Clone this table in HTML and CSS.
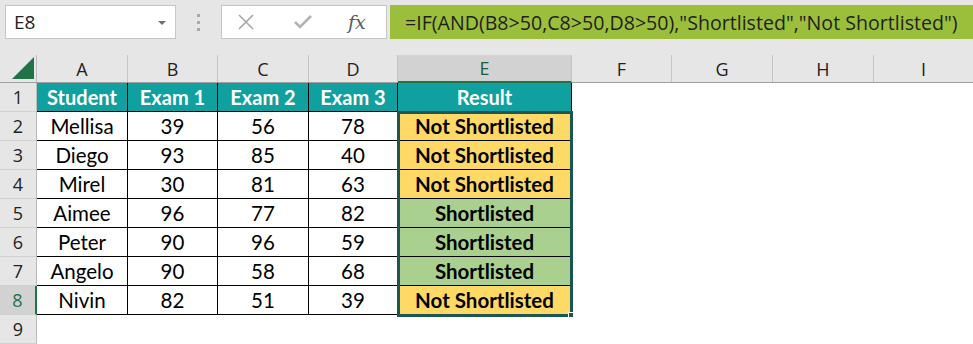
FILE: index.html
```html
<!DOCTYPE html>
<html lang="en">
<head>
    <meta charset="UTF-8">
    <meta name="viewport" content="width=device-width, initial-scale=1.0">
    <title>Shortlist - Book1</title>
    <link rel="stylesheet" href="styles.css">
</head>
<body>
    <div class="formula-row">
        <div class="name-box">
            <span>E8</span>
            <span class="caret"></span>
        </div>
        <div class="grip"><i></i><i></i><i></i></div>
        <div class="fx-buttons">
            <svg class="btn-icon" width="18" height="18" viewBox="0 0 18 18">
                <path d="M2 2 L16 16 M16 2 L2 16" stroke="#a6a6a6" stroke-width="1.6" fill="none"/>
            </svg>
            <svg class="btn-icon" width="20" height="18" viewBox="0 0 20 18">
                <path d="M2 9 L7 14 L18 3" stroke="#b3b3b3" stroke-width="2.6" fill="none"/>
            </svg>
            <span class="fx">fx</span>
        </div>
        <div class="formula">=IF(AND(B8&gt;50,C8&gt;50,D8&gt;50),"Shortlisted","Not Shortlisted")</div>
    </div>

    <div class="sheet">
        <div class="row head-row">
            <div class="corner">
                <svg width="22" height="22" viewBox="0 0 22 22"><polygon points="22,0 22,22 0,22" fill="#217346"/></svg>
            </div>
            <div class="col-head">A</div>
            <div class="col-head">B</div>
            <div class="col-head">C</div>
            <div class="col-head">D</div>
            <div class="col-head active">E</div>
            <div class="col-head">F</div>
            <div class="col-head">G</div>
            <div class="col-head">H</div>
            <div class="col-head last">I</div>
        </div>

        <div class="row">
            <div class="row-head">1</div>
            <div class="cell title">Student</div>
            <div class="cell title">Exam 1</div>
            <div class="cell title">Exam 2</div>
            <div class="cell title">Exam 3</div>
            <div class="cell title">Result</div>
        </div>
        <div class="row">
            <div class="row-head">2</div>
            <div class="cell">Mellisa</div>
            <div class="cell">39</div>
            <div class="cell">56</div>
            <div class="cell">78</div>
            <div class="cell result no">Not Shortlisted</div>
        </div>
        <div class="row">
            <div class="row-head">3</div>
            <div class="cell">Diego</div>
            <div class="cell">93</div>
            <div class="cell">85</div>
            <div class="cell">40</div>
            <div class="cell result no">Not Shortlisted</div>
        </div>
        <div class="row">
            <div class="row-head">4</div>
            <div class="cell">Mirel</div>
            <div class="cell">30</div>
            <div class="cell">81</div>
            <div class="cell">63</div>
            <div class="cell result no">Not Shortlisted</div>
        </div>
        <div class="row">
            <div class="row-head">5</div>
            <div class="cell">Aimee</div>
            <div class="cell">96</div>
            <div class="cell">77</div>
            <div class="cell">82</div>
            <div class="cell result yes">Shortlisted</div>
        </div>
        <div class="row">
            <div class="row-head">6</div>
            <div class="cell">Peter</div>
            <div class="cell">90</div>
            <div class="cell">96</div>
            <div class="cell">59</div>
            <div class="cell result yes">Shortlisted</div>
        </div>
        <div class="row">
            <div class="row-head">7</div>
            <div class="cell">Angelo</div>
            <div class="cell">90</div>
            <div class="cell">58</div>
            <div class="cell">68</div>
            <div class="cell result yes">Shortlisted</div>
        </div>
        <div class="row">
            <div class="row-head active">8</div>
            <div class="cell">Nivin</div>
            <div class="cell">82</div>
            <div class="cell">51</div>
            <div class="cell">39</div>
            <div class="cell result no">Not Shortlisted</div>
        </div>
        <div class="row">
            <div class="row-head">9</div>
        </div>

        <!-- selected range E2:E8 -->
        <div class="selection"><span class="fill-handle"></span></div>
    </div>
</body>
</html>
```

FILE: styles.css
```css
* {
    box-sizing: border-box;
}
body {
    margin: 0;
    background: #fff;
    font-family: 'Lato', sans-serif;
    color: #000;
    overflow: hidden;
}

/* name box + formula bar */
.formula-row {
    display: flex;
    align-items: stretch;
    height: 55px;
    padding: 5px 0 16px 5px;
    background: #e6e6e6;
}
.name-box {
    width: 171px;
    display: flex;
    align-items: center;
    justify-content: space-between;
    padding: 0 9px 0 8px;
    background: #fff;
    border: 1px solid #c6c6c6;
    font-family: 'Open Sans', sans-serif;
    font-size: 19px;
    color: #222;
}
.caret {
    width: 0;
    height: 0;
    border-left: 4px solid transparent;
    border-right: 4px solid transparent;
    border-top: 4px solid #707070;
    margin-top: 1px;
}
.grip {
    width: 45px;
    display: flex;
    flex-direction: column;
    align-items: center;
    justify-content: center;
    gap: 4px;
}
.grip i {
    width: 3px;
    height: 3px;
    background: #a9a9a9;
}
.fx-buttons {
    width: 166px;
    display: flex;
    align-items: center;
    padding: 0 0 0 15px;
    background: #fff;
    border: 1px solid #c6c6c6;
}
.btn-icon {
    display: block;
}
.fx-buttons .btn-icon + .btn-icon {
    margin-left: 38px;
}
.fx {
    margin-left: 35px;
    font-family: 'DejaVu Serif', 'Liberation Serif', serif;
    font-style: italic;
    font-size: 19px;
    color: #595959;
}
.formula {
    flex: 1;
    margin-left: 3px;
    display: flex;
    align-items: center;
    padding-left: 15px;
    background: #9bbf3b;
    font-family: 'Open Sans', sans-serif;
    font-size: 19.6px;
    color: #1f1f1f;
    white-space: nowrap;
    overflow: hidden;
}

/* grid */
.sheet {
    --cols: 37px 91px 90px 91px 89px 174px 100px 101px 101px 1fr;
    position: relative;
}
.row {
    display: grid;
    grid-template-columns: var(--cols);
    height: 29px;
}
.head-row {
    height: 28px;
    background: #e6e6e6;
    border-bottom: 1px solid #a0a0a0;
}
.corner {
    display: flex;
    align-items: flex-end;
    justify-content: flex-end;
    padding: 0 2px 3px 0;
    border-right: 1px solid #bcbcbc;
}
.col-head {
    display: flex;
    align-items: center;
    justify-content: center;
    font-family: 'Open Sans', sans-serif;
    font-size: 18px;
    color: #222;
    border-right: 1px solid #c4c4c4;
}
.col-head.last {
    border-right: none;
}
.col-head.active {
    background: #d2d2d2;
    color: #1f5a3a;
    border-bottom: 2px solid #217346;
    margin-bottom: -1px;
}
.row-head {
    display: flex;
    align-items: center;
    justify-content: center;
    background: #e6e6e6;
    border-right: 1px solid #bcbcbc;
    border-bottom: 1px solid #d0d0d0;
    font-family: 'Open Sans', sans-serif;
    font-size: 18px;
    color: #222;
}
.row-head.active {
    background: #d2d2d2;
    color: #217346;
    border-right: 2px solid #217346;
}
.cell {
    display: flex;
    align-items: center;
    justify-content: center;
    font-size: 20.5px;
    border-right: 1px solid #000;
    border-bottom: 1px solid #000;
    white-space: nowrap;
}
.cell.title {
    background: #0fa09f;
    color: #fff;
    font-weight: bold;
    font-size: 20px;
}
.cell.result {
    font-weight: bold;
}
.cell.no {
    background: #ffd966;
}
.cell.yes {
    background: #a9d08e;
}
.selection {
    position: absolute;
    left: 397px;
    top: 56px;
    width: 176px;
    height: 206px;
    border: 3px solid #1b5652;
    pointer-events: none;
}
.fill-handle {
    position: absolute;
    right: -4px;
    bottom: -4px;
    width: 6px;
    height: 6px;
    background: #1b5652;
    border: 1px solid #fff;
}
```
